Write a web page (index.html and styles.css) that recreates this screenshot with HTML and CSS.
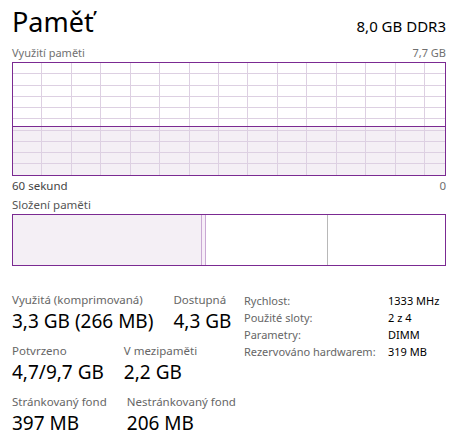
FILE: index.html
```html
<!DOCTYPE html>
<html lang="cs">
<head>
<meta charset="utf-8">
<title>Paměť</title>
<link rel="stylesheet" href="styles.css">
</head>
<body>
<div class="panel">
  <header class="head">
    <h1 class="title">Paměť</h1>
    <div class="spec">8,0 GB DDR3</div>
  </header>

  <div class="axis-top">
    <span>Využití paměti</span>
    <span>7,7 GB</span>
  </div>
  <svg class="chart" width="434" height="114" viewBox="0 0 434 114" shape-rendering="crispEdges">
    <rect x="0" y="64" width="434" height="50" fill="#f4eff5"/>
    <g stroke="#ddd0e2" stroke-width="1">
      <line x1="29.5" y1="0" x2="29.5" y2="114"/>
      <line x1="59.5" y1="0" x2="59.5" y2="114"/>
      <line x1="88.5" y1="0" x2="88.5" y2="114"/>
      <line x1="118.5" y1="0" x2="118.5" y2="114"/>
      <line x1="147.5" y1="0" x2="147.5" y2="114"/>
      <line x1="177.5" y1="0" x2="177.5" y2="114"/>
      <line x1="206.5" y1="0" x2="206.5" y2="114"/>
      <line x1="235.5" y1="0" x2="235.5" y2="114"/>
      <line x1="265.5" y1="0" x2="265.5" y2="114"/>
      <line x1="294.5" y1="0" x2="294.5" y2="114"/>
      <line x1="324.5" y1="0" x2="324.5" y2="114"/>
      <line x1="353.5" y1="0" x2="353.5" y2="114"/>
      <line x1="383.5" y1="0" x2="383.5" y2="114"/>
      <line x1="412.5" y1="0" x2="412.5" y2="114"/>
      <line x1="0" y1="11.5" x2="434" y2="11.5"/>
      <line x1="0" y1="23.5" x2="434" y2="23.5"/>
      <line x1="0" y1="34.5" x2="434" y2="34.5"/>
      <line x1="0" y1="45.5" x2="434" y2="45.5"/>
      <line x1="0" y1="56.5" x2="434" y2="56.5"/>
      <line x1="0" y1="68.5" x2="434" y2="68.5"/>
      <line x1="0" y1="79.5" x2="434" y2="79.5"/>
      <line x1="0" y1="90.5" x2="434" y2="90.5"/>
      <line x1="0" y1="101.5" x2="434" y2="101.5"/>
    </g>
    <line x1="0" y1="64.5" x2="434" y2="64.5" stroke="#7b2a92" stroke-width="1"/>
    <rect x="0.5" y="0.5" width="433" height="113" fill="none" stroke="#7b2a92" stroke-width="1"/>
  </svg>
  <div class="axis-bottom">
    <span class="dark">60 sekund</span>
    <span>0</span>
  </div>

  <div class="comp-label">Složení paměti</div>
  <div class="comp">
    <div class="seg inuse" style="width:188px"></div>
    <div class="seg modified" style="width:3px"></div>
    <div class="seg standby" style="width:121px"></div>
    <div class="seg free"></div>
  </div>

  <section class="stats">
    <div class="left">
      <div class="row">
        <div class="stat"><div class="lbl">Využitá (komprimovaná)</div><div class="val">3,3 GB (266 MB)</div></div>
        <div class="stat"><div class="lbl">Dostupná</div><div class="val">4,3 GB</div></div>
      </div>
      <div class="row">
        <div class="stat"><div class="lbl">Potvrzeno</div><div class="val">4,7/9,7 GB</div></div>
        <div class="stat"><div class="lbl">V mezipaměti</div><div class="val">2,2 GB</div></div>
      </div>
      <div class="row">
        <div class="stat"><div class="lbl">Stránkovaný fond</div><div class="val">397 MB</div></div>
        <div class="stat"><div class="lbl">Nestránkovaný fond</div><div class="val">206 MB</div></div>
      </div>
    </div>
    <dl class="props">
      <dt>Rychlost:</dt><dd>1333 MHz</dd>
      <dt>Použité sloty:</dt><dd>2 z 4</dd>
      <dt>Parametry:</dt><dd>DIMM</dd>
      <dt>Rezervováno hardwarem:</dt><dd>319 MB</dd>
    </dl>
  </section>
</div>
</body>
</html>
```

FILE: styles.css
```css
html, body {
  margin: 0;
  padding: 0;
  background: #ffffff;
}
body {
  font-family: "Noto Sans", "Open Sans", sans-serif;
  color: #000;
}
.panel {
  width: 434px;
  padding: 0 12px;
}
.head {
  display: flex;
  justify-content: space-between;
  align-items: baseline;
  height: 45px;
}
.title {
  margin: 0;
  font-size: 27px;
  font-weight: 400;
  line-height: 44px;
  letter-spacing: 0;
}
.spec {
  font-size: 15px;
  line-height: 44px;
}
.axis-top, .axis-bottom {
  display: flex;
  justify-content: space-between;
  font-size: 11px;
  color: #707070;
}
.axis-top {
  height: 17px;
  line-height: 16px;
}
.chart {
  display: block;
}
.axis-bottom {
  height: 20px;
  line-height: 20px;
  font-size: 11.5px;
}
.axis-bottom .dark {
  color: #444;
}
.comp-label {
  font-size: 11.5px;
  color: #555;
  line-height: 18px;
  height: 18px;
}
.comp {
  display: flex;
  height: 50px;
  border: 1px solid #7b2a92;
}
.seg {
  height: 100%;
}
.inuse {
  background: #f4eff5;
  border-right: 1px solid #c9a8d3;
}
.modified {
  background: #f7eef8;
  border-right: 1px solid #c9a8d3;
}
.standby {
  border-right: 1px solid #b8b8b8;
}
.free {
  flex: 1;
}
.stats {
  display: flex;
  align-items: flex-start;
  margin-top: 26px;
}
.left {
  width: 232px;
}
.row {
  display: flex;
  gap: 20px;
  margin-bottom: 9px;
}
.lbl {
  font-size: 11.5px;
  color: #666;
  line-height: 16px;
}
.val {
  font-size: 19px;
  line-height: 26px;
}
.props {
  margin: 0;
  display: grid;
  grid-template-columns: 144px auto;
  align-content: start;
  font-size: 11px;
  line-height: 17px;
}
.props dt {
  color: #666;
}
.props dd {
  margin: 0;
}
```
